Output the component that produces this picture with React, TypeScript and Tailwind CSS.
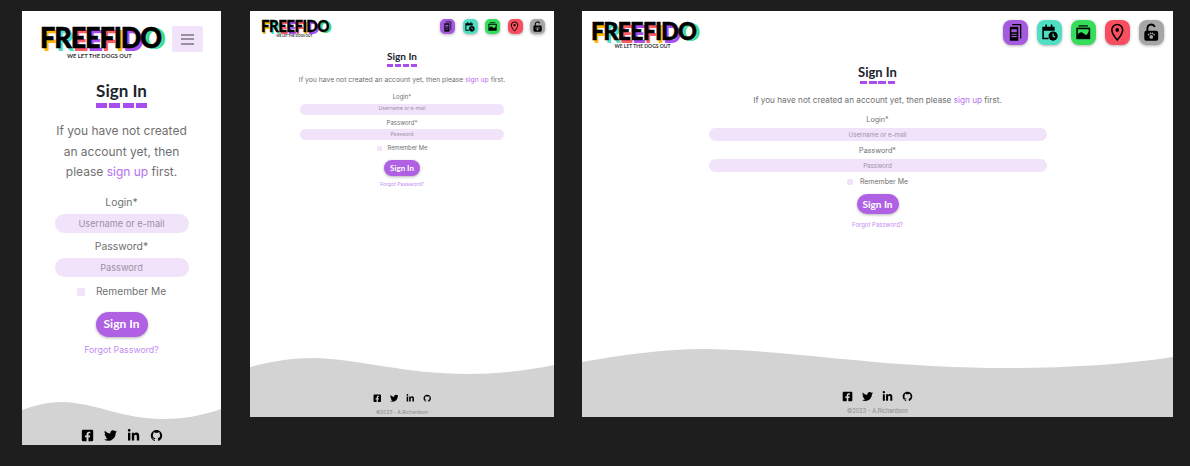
import React from "react"
import { FaFacebookSquare, FaTwitter, FaLinkedinIn } from "react-icons/fa"
import { AiOutlineGithub } from "react-icons/ai"

const body = "font-['Inter',sans-serif]"
const title = "font-['Lato',sans-serif]"

const mobile = {
   frame: "w-[199px] h-[434px]",
   header: "h-[53px] pt-[14px] pl-[18px] pr-[18px]",
   logo: "text-[29px]",
   heading: "mt-[16px] text-[17px] leading-[22px]",
   dashes: "mt-[1px] w-[51px] h-[5px]",
   para: "mt-[13px] w-[140px] text-[12px] leading-[20.6px]",
   form: "mt-[13px] w-[134px]",
   label: "text-[10.4px] leading-[14px]",
   gap: "mt-[7px]",
   input: "mt-[4.5px] h-[18.5px] text-[9.2px]",
   check: "mt-[9px] h-[12px] gap-[11px] text-[10.2px]",
   box: "size-[8px]",
   button: "mt-[14px] w-[52px] h-[25px] text-[12px]",
   forgot: "mt-[6px] text-[8.8px]",
   footer: "h-[43px]",
   icons: "gap-[10px] text-[13px] pb-[3px]",
   copy: "",
   view: "0 0 100 43",
   wave: "M0 8 C 6 4, 12 0, 20 0 C 38 1, 50 17, 71 17 C 80 17, 90 14, 100 7 L100 43 L0 43 Z",
}

const tablet = {
   frame: "w-[304px] h-[406px]",
   header: "h-[30px] pt-[8px] pl-[11px] pr-[9px]",
   logo: "text-[16.3px]",
   heading: "mt-[9px] text-[10px] leading-[12px]",
   dashes: "mt-[2px] w-[30px] h-[3px]",
   para: "mt-[8px] w-[240px] text-[6.8px] leading-[10px]",
   form: "mt-[8px] w-[204px]",
   label: "text-[6px] leading-[8px]",
   gap: "mt-[4px]",
   input: "mt-[2.5px] h-[11px] text-[5px]",
   check: "mt-[5px] h-[7px] gap-[6px] text-[5.8px]",
   box: "size-[5px]",
   button: "mt-[8px] w-[36px] h-[16px] text-[8px]",
   forgot: "mt-[5px] text-[5.2px]",
   footer: "h-[59px]",
   icons: "gap-[8px] text-[8.5px]",
   copy: "mt-[6px] mb-[1px] text-[4.9px]",
   view: "0 0 304 59",
   wave: "M0 9 C 20 4, 40 0, 63 0 C 110 1, 155 16, 217 16 C 245 16, 275 13, 304 7 L304 59 L0 59 Z",
}

const desktop = {
   frame: "w-[591px] h-[406px]",
   header: "h-[35px] pt-[9px] pl-[9px] pr-[9px]",
   logo: "text-[25.2px]",
   heading: "mt-[18px] text-[13px] leading-[16px]",
   dashes: "mt-[1px] w-[35px] h-[3px]",
   para: "mt-[10px] w-[300px] text-[8.2px] leading-[12px]",
   form: "mt-[9px] w-[338px]",
   label: "text-[7.2px] leading-[10px]",
   gap: "mt-[5px]",
   input: "mt-[3px] h-[13px] text-[6.2px]",
   check: "mt-[6px] h-[8px] gap-[7px] text-[7px]",
   box: "size-[6px]",
   button: "mt-[8px] w-[42px] h-[20px] text-[10px]",
   forgot: "mt-[5.5px] text-[6px]",
   footer: "h-[68px]",
   icons: "gap-[9px] text-[11px]",
   copy: "mt-[5px] mb-[1px] text-[5.7px]",
   view: "0 0 591 68",
   wave: "M0 13 C 40 6, 80 0, 125 0 C 220 2, 300 19, 425 19 C 480 19, 540 16, 591 8 L591 68 L0 68 Z",
}

type Size = typeof mobile

function App() {
   return (
      <div className="flex items-start h-[466px] w-[1190px] overflow-hidden bg-[#1e1e1e] pl-[22px] pt-[11px]">
         <Screen size={mobile} menu/>
         <div className="w-[29px]"/>
         <Screen size={tablet} navClass="size-[15px] rounded-[5px]" navGap="gap-[7.5px]"/>
         <div className="w-[28px]"/>
         <Screen size={desktop} navClass="size-[25px] rounded-[8px]" navGap="gap-[9px]"/>
      </div>
   )
}

export default App


function Screen({ size, menu, navClass, navGap }: { size: Size, menu?: boolean, navClass?: string, navGap?: string }) {
   return (
      <div className={`flex flex-col bg-white ${body} ${size.frame}`}>
         <div className={`flex items-start justify-between ${size.header}`}>
            <Logo size={size.logo}/>
            {menu ? <MenuButton/> : <NavIcons className={navClass} gap={navGap}/>}
         </div>
         <div className="flex flex-col items-center">
            <h1 className={`font-bold text-[#20232b] ${title} ${size.heading}`}>Sign In</h1>
            <Dashes className={size.dashes}/>
            <p className={`text-center text-[#707070] ${size.para}`}>
               If you have not created an account yet, then please <a className="text-[#b56df0]" href="#">sign up</a> first.
            </p>
            <form className={`flex flex-col items-center ${size.form}`}>
               <label className={`text-[#707070] ${size.label}`}>Login*</label>
               <div className={`flex w-full items-center justify-center rounded-full bg-[#f1e3fa] text-[#9d8fa8] ${size.input}`}>Username or e-mail</div>
               <label className={`text-[#707070] ${size.gap} ${size.label}`}>Password*</label>
               <div className={`flex w-full items-center justify-center rounded-full bg-[#f1e3fa] text-[#9d8fa8] ${size.input}`}>Password</div>
               <div className={`flex items-center text-[#707070] ${size.check}`}>
                  <span className={`rounded-[1px] bg-[#f1e3fa] ${size.box}`}/>
                  Remember Me
               </div>
               <button type="button" className={`rounded-full bg-[#b061e3] font-bold text-white shadow-[0_1px_3px_rgba(0,0,0,0.3)] ${title} ${size.button}`}>Sign In</button>
               <a className={`text-[#c58bf2] ${size.forgot}`} href="#">Forgot Password?</a>
            </form>
         </div>
         <footer className={`relative mt-auto ${size.footer}`}>
            <svg className="absolute inset-0 h-full w-full" viewBox={size.view} preserveAspectRatio="none">
               <path d={size.wave} fill="#d3d3d3"/>
            </svg>
            <div className="relative flex h-full flex-col items-center justify-end">
               <div className={`flex items-center text-black ${size.icons}`}>
                  <FaFacebookSquare/>
                  <FaTwitter/>
                  <FaLinkedinIn/>
                  <AiOutlineGithub/>
               </div>
               {size.copy && <p className={`text-[#8a8a8a] ${size.copy}`}>©2023 - A.Richardson</p>}
            </div>
         </footer>
      </div>
   )
}

function Logo({ size }: { size: string }) {
   return (
      <div className={`flex flex-col items-start ${size}`}>
         <div className="origin-left scale-x-[0.93] font-['Lato',sans-serif] font-black leading-[0.8] tracking-[-0.04em] whitespace-nowrap text-black [-webkit-text-stroke:0.02em_#000]">
            <span className="[text-shadow:0.09em_0.12em_0_#ffb703]">F</span>
            <span className="[text-shadow:0.09em_0.12em_0_#4fe0c4]">R</span>
            <span className="[text-shadow:0.09em_0.12em_0_#ff5a66]">E</span>
            <span className="[text-shadow:0.09em_0.12em_0_#a94cf0]">E</span>
            <span className="[text-shadow:0.09em_0.12em_0_#ff5a66]">F</span>
            <span className="[text-shadow:0.09em_0.12em_0_#ffb703]">I</span>
            <span className="[text-shadow:0.09em_0.12em_0_#a94cf0]">D</span>
            <span className="[text-shadow:0.07em_0.03em_0_#4fe0c4,0.14em_0.05em_0_#3bdc64]">O</span>
         </div>
         <div className="mt-[0.8em] ml-[4.65em] text-[0.2em] leading-none font-bold whitespace-nowrap text-[#333] font-['Lato',sans-serif]">WE LET THE DOGS OUT</div>
      </div>
   )
}

function MenuButton() {
   return (
      <div className="mt-px flex h-[26px] w-[31px] items-center justify-center rounded-[2px] bg-[#f1e3fa]">
         <div className="flex w-[13px] flex-col gap-[2.5px]">
            <span className="h-[2px] bg-[#9a8f9f]"/>
            <span className="h-[2px] bg-[#9a8f9f]"/>
            <span className="h-[2px] bg-[#9a8f9f]"/>
         </div>
      </div>
   )
}

function Dashes({ className }: { className: string }) {
   return (
      <div className={`flex justify-between ${className}`}>
         <span className="w-[21%] bg-[#a94cf0]"/>
         <span className="w-[21%] bg-[#a94cf0]"/>
         <span className="w-[21%] bg-[#a94cf0]"/>
         <span className="w-[21%] bg-[#a94cf0]"/>
      </div>
   )
}

function NavIcons({ className, gap }: { className?: string, gap?: string }) {
   const tile = `flex items-center justify-center shadow-[0_1px_3px_rgba(0,0,0,0.3)] ${className}`
   const icon = "h-[74%] w-[74%]"
   return (
      <div className={`flex ${gap}`}>
         <div className={`${tile} bg-[#a45be0]`}>
            <svg className={icon} viewBox="0 0 24 24">
               <path d="M8 2h11v18" fill="none" stroke="#000" strokeWidth="1.6"/>
               <path d="M5 5h11v18H5z" fill="#000"/>
               <path d="M7 8h7v4H7zM7 14h7v1.4H7zM7 17h7v1.4H7z" fill="#a45be0"/>
            </svg>
         </div>
         <div className={`${tile} bg-[#4fe0c4]`}>
            <svg className={icon} viewBox="0 0 24 24">
               <path d="M3 5h16v5h-14v9h6v2H3z" fill="#000"/>
               <path d="M7 2h2v4H7zM14 2h2v4h-2z" fill="#000"/>
               <circle cx="17" cy="17" r="6" fill="#000"/>
               <path d="M17 13.5V17l2.5 1.5" fill="none" stroke="#4fe0c4" strokeWidth="1.5"/>
            </svg>
         </div>
         <div className={`${tile} bg-[#35de5a]`}>
            <svg className={icon} viewBox="0 0 24 24">
               <path d="M6 3h12v1.6H6z" fill="#000"/>
               <path d="M3 6h18v15H3z" fill="#000"/>
               <path d="M5 15c3-4 5-4 8-1s4 1 6-3V8H5z" fill="#35de5a"/>
            </svg>
         </div>
         <div className={`${tile} bg-[#f94d60]`}>
            <svg className={icon} viewBox="0 0 24 24">
               <path d="M12 2a7 7 0 0 0-7 7c0 5 7 13 7 13s7-8 7-13a7 7 0 0 0-7-7z" fill="none" stroke="#000" strokeWidth="2"/>
               <circle cx="12" cy="9" r="2.4" fill="#000"/>
            </svg>
         </div>
         <div className={`${tile} bg-[#a6a6a6]`}>
            <svg className={icon} viewBox="0 0 24 24">
               <path d="M7 11V7a5 5 0 0 1 9.6-2" fill="none" stroke="#000" strokeWidth="2.4"/>
               <rect x="3" y="10" width="18" height="13" rx="2.5" fill="#000"/>
               <circle cx="12" cy="18" r="2.4" fill="#a6a6a6"/>
               <circle cx="8.5" cy="15" r="1.1" fill="#a6a6a6"/>
               <circle cx="11" cy="13.5" r="1.1" fill="#a6a6a6"/>
               <circle cx="13.5" cy="13.5" r="1.1" fill="#a6a6a6"/>
               <circle cx="15.8" cy="15" r="1.1" fill="#a6a6a6"/>
            </svg>
         </div>
      </div>
   )
}
